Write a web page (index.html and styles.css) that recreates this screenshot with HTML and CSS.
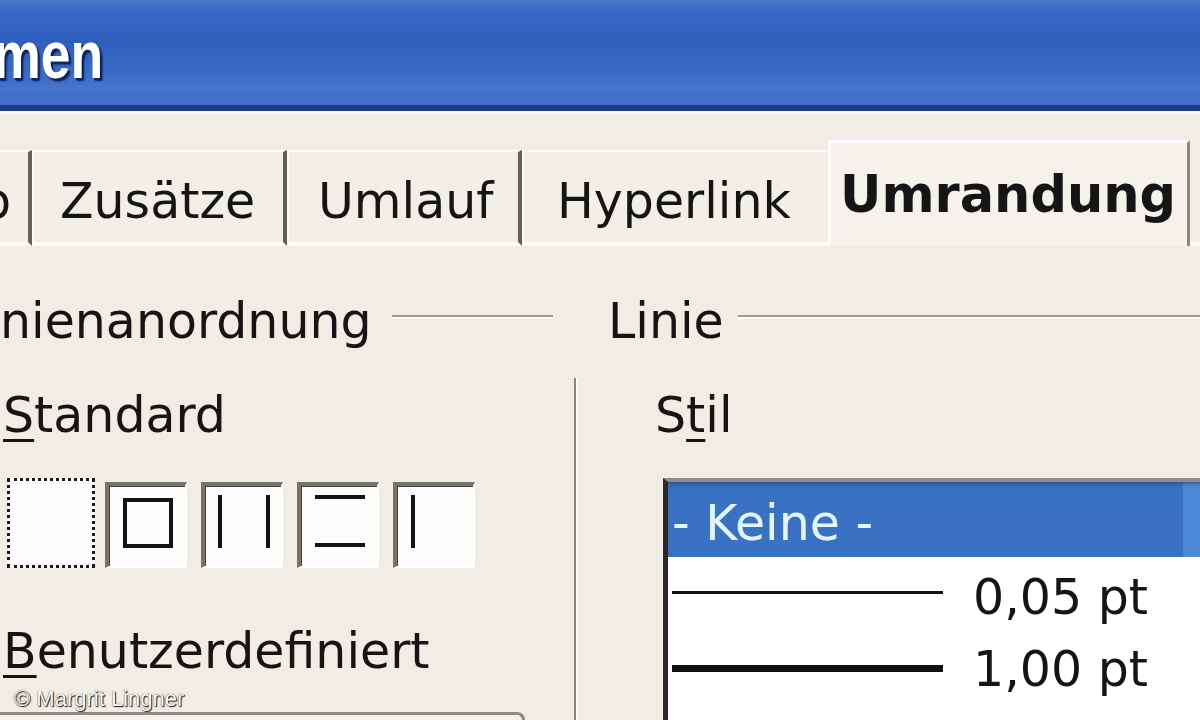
FILE: index.html
```html
<!DOCTYPE html>
<html lang="de">
<head>
<meta charset="utf-8">
<title>Rahmen</title>
<link rel="stylesheet" href="styles.css">
</head>
<body>
<div class="dialog">
  <header class="titlebar">
    <div class="title-clip"><span class="title">Rahmen</span></div>
  </header>
  <div class="titleedge"></div>

  <nav class="tabs">
    <div class="tab tab-first"><span class="tab-clip"><span>Typ</span></span></div>
    <div class="tab tab-zus">Zusätze</div>
    <div class="tab tab-uml">Umlauf</div>
    <div class="tab tab-hyp">Hyperlink</div>
    <div class="tab active">Umrandung</div>
    <div class="tab-fill"></div>
  </nav>

  <main class="panel">
    <section class="col-left">
      <div class="group-head">
        <span class="head-text">nienanordnung</span>
        <div class="groove groove-left"></div>
      </div>
      <div class="label label-std"><u>S</u>tandard</div>
      <div class="presets">
        <div class="preset focus"></div>
        <div class="preset">
          <svg viewBox="0 0 76 80" width="76" height="80"><rect x="16" y="14" width="46" height="46" fill="none" stroke="#141414" stroke-width="4"/></svg>
        </div>
        <div class="preset">
          <svg viewBox="0 0 76 80" width="76" height="80"><path d="M15 9V62M63 9V62" stroke="#141414" stroke-width="4" fill="none"/></svg>
        </div>
        <div class="preset">
          <svg viewBox="0 0 76 80" width="76" height="80"><path d="M14 11H64M14 59H64" stroke="#141414" stroke-width="4" fill="none"/></svg>
        </div>
        <div class="preset">
          <svg viewBox="0 0 76 80" width="76" height="80"><path d="M16 9V62" stroke="#141414" stroke-width="4" fill="none"/></svg>
        </div>
      </div>
      <div class="label label-user"><u>B</u>enutzerdefiniert</div>
      <div class="userbox"></div>
    </section>

    <div class="vsep"></div>

    <section class="col-right">
      <div class="group-head">
        <span class="head-text">Linie</span>
        <div class="groove groove-right"></div>
      </div>
      <div class="label label-stil">S<u>t</u>il</div>
      <div class="listbox">
        <div class="row selected">- Keine -</div>
        <div class="row"><span class="sample thin"></span><span class="val">0,05 pt</span></div>
        <div class="row"><span class="sample thick"></span><span class="val">1,00 pt</span></div>
      </div>
    </section>
  </main>

  <div class="credit">© Margrit Lingner</div>
</div>
</body>
</html>
```
FILE: styles.css
```css
* { box-sizing: border-box; }
html, body { margin: 0; padding: 0; }
body {
  width: 1200px;
  height: 720px;
  overflow: hidden;
  background: #f1ede4;
  font-family: "DejaVu Sans", sans-serif;
  font-size: 49px;
  line-height: 57px;
  color: #151515;
}
.dialog { position: relative; width: 1200px; height: 720px; overflow: hidden; }

/* title bar */
.titlebar {
  height: 111px;
  padding-top: 21px;
  background: linear-gradient(180deg, #4b79cd 0%, #3667c3 12%, #2f5fbd 40%, #3769c5 65%, #4575cd 85%, #3e6ec6 100%);
  border-bottom: 6px solid #1d3b80;
}
.title-clip {
  display: flex;
  justify-content: flex-end;
  overflow: hidden;
  width: 112px;
  padding-right: 9px;
  white-space: nowrap;
}
.title {
  display: inline-block;
  font-family: "Liberation Sans", Arial, sans-serif;
  font-weight: bold;
  font-size: 67px;
  line-height: 67px;
  color: #ffffff;
  transform: scaleX(0.8);
  transform-origin: right center;
  text-shadow: 2px 2px 0 #0e2359, 3px 3px 2px #0e2359;
}
.titleedge { height: 3px; background: #fbfaf6; }

/* tabs */
.tabs {
  display: flex;
  align-items: flex-end;
  height: 106px;
  margin-top: 26px;
}
.tab {
  flex: none;
  height: 96px;
  padding-top: 20.5px;
  background: #f2efe7;
  border-top: 2px solid #fdfcf8;
  border-left: 2px solid #fdfcf8;
  border-right: 4px solid #625f59;
  border-bottom: 4px solid #fdfcf8;
  white-space: nowrap;
}
.tab-first { width: 32px; border-left: none; }
.tab-clip {
  display: flex;
  justify-content: flex-end;
  overflow: hidden;
  width: 11px;
}
.tab-zus { width: 255px; padding-left: 26px; }
.tab-uml { width: 235px; padding-left: 29px; }
.tab-hyp { width: 306px; padding-left: 33px; border-right: none; }
.tab.active {
  width: 362px;
  height: 106px;
  padding-top: 23px;
  padding-left: 9px;
  font-weight: bold;
  font-size: 51px;
  background: #f5f2eb;
  border-top: 3px solid #ffffff;
  border-left: 3px solid #ffffff;
  border-right: 3px solid #8c8980;
  border-bottom: none;
}
.tab-fill { flex: 1; height: 4px; background: #fdfcf8; }

/* panel */
.panel {
  display: flex;
  height: 474px;
  padding-top: 46.5px;
}
.col-left {
  width: 553px;
  flex: none;
  display: flex;
  flex-direction: column;
}
.col-right {
  flex: 1;
  min-width: 0;
  display: flex;
  flex-direction: column;
}
.group-head {
  display: flex;
  align-items: flex-start;
  height: 57px;
  flex: none;
}
.head-text { flex: none; white-space: nowrap; }
.groove {
  flex: 1;
  margin-top: 22.5px;
  border-top: 2px solid #9d998f;
  border-bottom: 2px solid #ffffff;
}
.groove-left { margin-left: 20px; }
.groove-right { margin-left: 14px; }

.vsep {
  flex: none;
  width: 4px;
  margin: 85.5px 30px 0 21px;
  border-left: 2px solid #8a877f;
  border-right: 2px solid #ffffff;
}

.label { flex: none; margin-top: 37px; white-space: nowrap; }
.label-std { padding-left: 3px; }
.label-stil { padding-left: 47px; }
.label-user { margin-top: 54.5px; padding-left: 3px; }
u {
  text-decoration-thickness: 3px;
  text-underline-offset: 7px;
}

/* preset boxes */
.presets {
  display: flex;
  align-items: flex-end;
  gap: 14px;
  margin-top: 34.5px;
  padding-left: 7px;
  height: 90px;
  flex: none;
}
.preset {
  width: 82px;
  height: 86px;
  flex: none;
  background: #fcfcfa;
  border-top: 4px solid #77746d;
  border-left: 4px solid #77746d;
  border-right: 2px solid #ffffff;
  border-bottom: 2px solid #ffffff;
  box-shadow: inset 1px 1px 0 #45423d;
}
.preset svg { display: block; }
.preset.focus {
  width: 88px;
  height: 90px;
  margin-right: -4px;
  border: 3px dotted #1a1a1a;
  box-shadow: none;
  background: #fdfdfb;
}

.userbox {
  flex: none;
  margin-top: 32.5px;
  width: 525px;
  height: 30px;
  border-top: 3px solid #8e8b84;
  border-right: 3px solid #8e8b84;
  border-top-right-radius: 8px;
  background: #f4f1ea;
}

/* list box */
.listbox {
  flex: none;
  margin-top: 34.5px;
  margin-left: 55px;
  width: 560px;
  height: 260px;
  background: #ffffff;
  border-top: 4px solid #8d8d8d;
  border-left: 5px solid #2a2a2a;
}
.row {
  display: flex;
  align-items: flex-start;
  height: 72px;
  padding-top: 11.5px;
  padding-left: 4px;
  white-space: nowrap;
}
.row.selected {
  height: 75px;
  padding-top: 12.5px;
  color: #e4f5ff;
  background: linear-gradient(90deg, #3a72c3 0, #3a72c3 515px, #4f8ad8 515px);
  box-shadow: inset 0 5px 4px -3px rgba(30, 50, 90, 0.55);
}
.sample { flex: none; width: 271px; background: #111111; }
.sample.thin { height: 3px; margin-top: 22px; }
.sample.thick { height: 7px; margin-top: 24px; }
.val { margin-left: 30px; }

/* watermark */
.credit {
  position: absolute;
  left: 14px;
  top: 688px;
  font-family: "Liberation Sans", Arial, sans-serif;
  font-size: 22px;
  line-height: 22px;
  color: #ffffff;
  text-shadow: 0 0 1px #000000, 1px 1px 1px #1a1a1a;
  white-space: nowrap;
}
```
